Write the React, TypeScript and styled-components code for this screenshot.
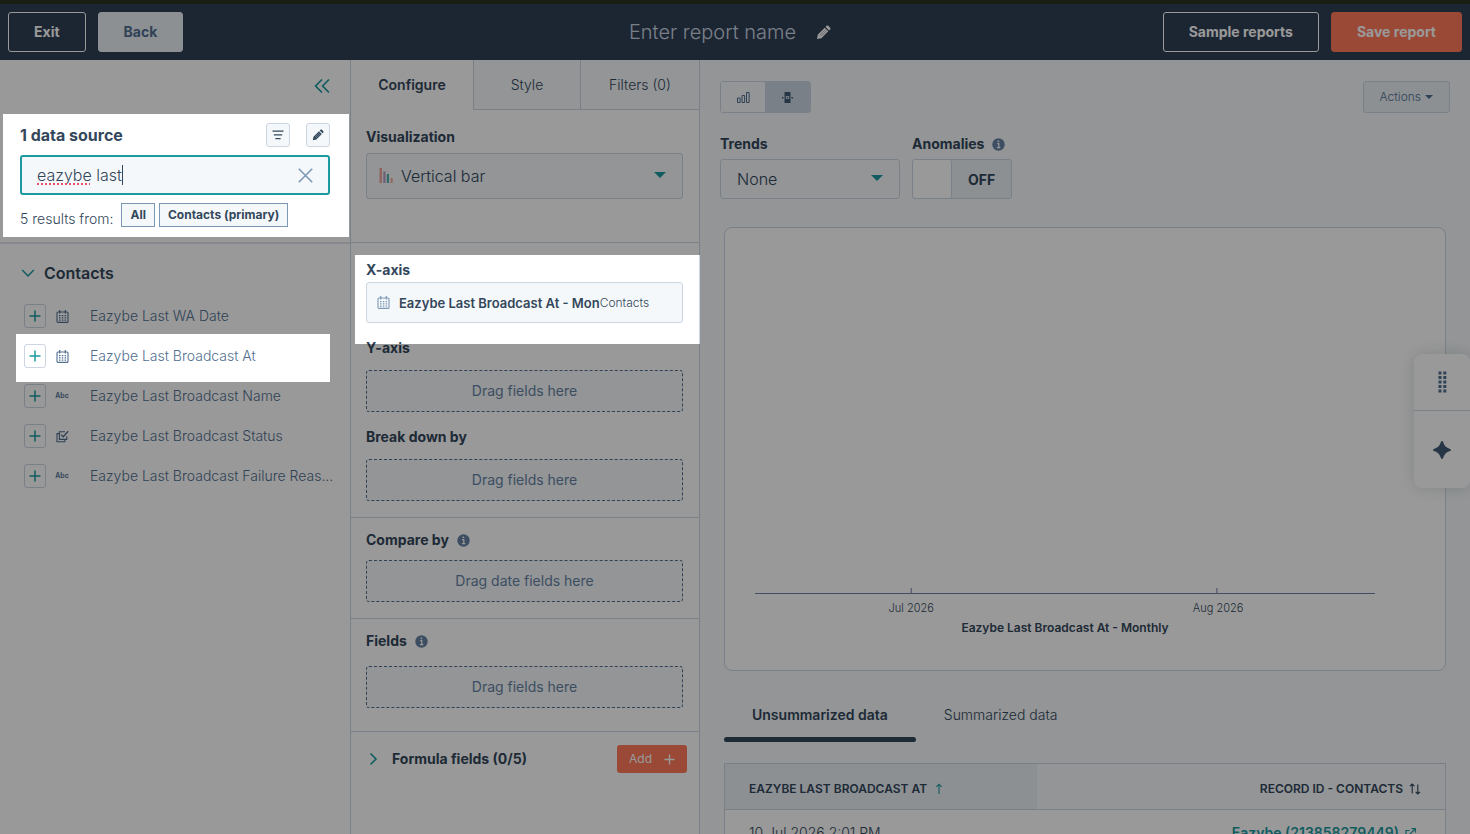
import React, { useState } from 'react';
import styled, { createGlobalStyle, css } from 'styled-components';

const c = {
  navy: '#33475b',
  slate: '#516f90',
  steel: '#6683a5',
  mist: '#7c98b6',
  header: '#303e54',
  teal: '#1d9aa0',
  orange: '#ff7a59',
  line: '#cbd6e2',
  fill: '#f5f8fa',
  shade: '#eaf0f6',
};

const GlobalStyle = createGlobalStyle`
  *, *::before, *::after { box-sizing: border-box; }
  body {
    margin: 0;
    overflow: hidden;
    background: #fff;
    color: ${c.navy};
    font-family: Inter, 'Open Sans', sans-serif;
    font-size: 14px;
    line-height: 20px;
  }
  button, input, select { font: inherit; color: inherit; margin: 0; }
  button { cursor: pointer; padding: 0; }
  h1, h2, h3, ul { margin: 0; padding: 0; font: inherit; }
  svg { display: block; flex: none; }
`;

const Shell = styled.div`
  display: flex;
  flex-direction: column;
  height: 100vh;
  overflow: hidden;
`;

/* ---------- header ---------- */

const Header = styled.header`
  display: grid;
  grid-template-columns: 1fr auto 1fr;
  align-items: center;
  flex: none;
  padding: 8px;
  border-top: 4px solid #2d3520;
  background: ${c.header};
`;

const HeaderGroup = styled.div<{ $end?: boolean }>`
  display: flex;
  gap: 12px;
  justify-content: ${(p) => (p.$end ? 'flex-end' : 'flex-start')};
`;

const HeaderButton = styled.button<{ $kind: 'outline' | 'muted' | 'primary' }>`
  height: 40px;
  padding: 0 25px;
  border: 1px solid #fff;
  border-radius: 3px;
  font-weight: 700;
  white-space: nowrap;
  background: transparent;
  color: #fff;
  ${(p) => p.$kind === 'muted' && css`background: ${c.shade}; border-color: ${c.shade}; color: ${c.slate};`}
  ${(p) => p.$kind === 'primary' && css`background: ${c.orange}; border-color: ${c.orange};`}
`;

const ReportName = styled.button`
  display: flex;
  align-items: center;
  gap: 20px;
  padding-right: 10px;
  border: 0;
  background: none;
  color: ${c.line};
  font-size: 20px;
  line-height: 24px;
  font-weight: 300;
  svg { color: #fff; }
`;

/* ---------- columns ---------- */

const Columns = styled.div`
  display: grid;
  grid-template-columns: 351px 349px minmax(0, 1fr);
  flex: 1;
  min-height: 0;
`;

const Sources = styled.aside`
  border-right: 1px solid ${c.line};
  overflow: hidden;
`;

const CollapseRow = styled.div`
  display: flex;
  align-items: center;
  justify-content: flex-end;
  height: 52px;
  padding-right: 20px;
`;

const BareButton = styled.button`
  display: flex;
  align-items: center;
  justify-content: center;
  border: 0;
  background: none;
  color: ${c.teal};
`;

const SourceTools = styled.div`
  display: flex;
  flex-direction: column;
  gap: 8px;
  padding: 11px 20px 15px;
  border-bottom: 2px solid #dfe3eb;
`;

const SourceHead = styled.div`
  display: flex;
  align-items: center;
  gap: 16px;
`;

const SourceTitle = styled.h2`
  flex: 1;
  font-size: 16px;
  font-weight: 700;
`;

const SmallButton = styled.button<{ $plus?: boolean }>`
  display: flex;
  align-items: center;
  justify-content: center;
  flex: none;
  width: ${(p) => (p.$plus ? 22 : 24)}px;
  height: 24px;
  border: 1px solid ${c.line};
  border-radius: 3px;
  background: ${(p) => (p.$plus ? '#fff' : c.fill)};
  color: ${(p) => (p.$plus ? c.teal : c.navy)};
`;

const SearchBox = styled.div`
  position: relative;
  display: flex;
  align-items: center;
  height: 40px;
  padding: 0 15px;
  border: 2px solid ${c.teal};
  border-radius: 3px;
  background: ${c.fill};
`;

const SearchInput = styled.input`
  flex: 1;
  min-width: 0;
  padding: 0;
  border: 0;
  outline: 0;
  background: none;
  font-size: 16px;
  font-weight: 300;
`;

const Misspelling = styled.svg`
  position: absolute;
  left: 15px;
  bottom: 8px;
`;

const Caret = styled.span`
  position: absolute;
  left: 100px;
  top: 8px;
  width: 1px;
  height: 20px;
  background: ${c.navy};
`;

const ResultRow = styled.div`
  display: flex;
  align-items: center;
  gap: 4px;
`;

const ResultCount = styled.span`
  padding: 7px 4px 0 0;
  font-weight: 300;
  line-height: 17px;
`;

const Chip = styled.button`
  height: 24px;
  padding: 0 8px;
  border: 1px solid ${c.mist};
  background: ${c.fill};
  font-size: 12px;
  font-weight: 700;
`;

const GroupHead = styled.button`
  display: flex;
  align-items: center;
  gap: 8px;
  padding: 18px 20px 12px;
  border: 0;
  background: none;
  color: ${c.navy};
  font-size: 16px;
  line-height: 22px;
  font-weight: 600;
  svg { color: ${c.teal}; }
`;

const PropertyList = styled.ul`
  list-style: none;
`;

const PropertyRow = styled.li`
  display: flex;
  align-items: center;
  height: 40px;
  padding: 0 14px 0 24px;
  color: ${c.slate};
`;

const TypeIcon = styled.span`
  display: flex;
  justify-content: center;
  flex: none;
  width: 32px;
  margin-right: 12px;
  font-size: 7px;
  font-weight: 600;
  line-height: 20px;
`;

const PropertyName = styled.span`
  overflow: hidden;
  text-overflow: ellipsis;
  white-space: nowrap;
  font-weight: 300;
`;

/* ---------- configuration ---------- */

const Config = styled.section`
  border-right: 1px solid ${c.line};
  overflow: hidden;
`;

const ConfigTabs = styled.div`
  display: grid;
  grid-template-columns: 122px 107px 1fr;
  height: 50px;
`;

const ConfigTab = styled.button<{ $active?: boolean }>`
  border: 0 solid ${c.line};
  border-width: ${(p) => (p.$active ? '0' : '0 0 1px 1px')};
  background: ${(p) => (p.$active ? '#fff' : c.fill)};
  font-weight: ${(p) => (p.$active ? 600 : 300)};
`;

const Section = styled.div<{ $top: number; $bottom: number }>`
  display: flex;
  flex-direction: column;
  gap: 15px;
  padding: ${(p) => p.$top}px 16px ${(p) => p.$bottom}px 15px;
  border-bottom: 1px solid ${c.line};
`;

const Field = styled.div<{ $gap: number }>`
  display: flex;
  flex-direction: column;
  gap: ${(p) => p.$gap}px;
`;

const FieldRow = styled.div`
  display: grid;
  grid-template-columns: 180px 100px;
  gap: 12px;
  padding-top: 21px;
`;

const Label = styled.label`
  display: flex;
  align-items: center;
  gap: 8px;
  font-weight: 700;
`;

const SelectWrap = styled.div<{ $height: number }>`
  position: relative;
  height: ${(p) => p.$height}px;
`;

const Select = styled.select<{ $indent: number }>`
  appearance: none;
  width: 100%;
  height: 100%;
  padding: 0 32px 0 ${(p) => p.$indent}px;
  border: 1px solid ${c.line};
  border-radius: 3px;
  background: ${c.fill};
  font-size: 16px;
  font-weight: 300;
`;

const SelectArrow = styled.span`
  position: absolute;
  right: 17px;
  top: 50%;
  margin-top: -4px;
  border: 6px solid transparent;
  border-top-color: ${c.teal};
  border-bottom: 0;
  pointer-events: none;
`;

const SelectIcon = styled.span`
  position: absolute;
  left: 13px;
  top: 15px;
  pointer-events: none;
`;

const Picked = styled.button`
  display: flex;
  align-items: center;
  height: 41px;
  padding: 0 10px;
  border: 1px solid ${c.line};
  border-radius: 3px;
  background: ${c.fill};
  font-size: 13px;
  white-space: nowrap;
  overflow: hidden;
  svg { margin-right: 9px; color: ${c.mist}; }
`;

const PickedName = styled.span`
  font-weight: 600;
`;

const PickedSource = styled.span`
  font-size: 12px;
  font-weight: 300;
`;

const DropZone = styled.div`
  display: flex;
  align-items: center;
  justify-content: center;
  height: 42px;
  border: 1px dashed ${c.slate};
  border-radius: 3px;
  background: ${c.fill};
  color: ${c.steel};
`;

const Formula = styled.div`
  display: flex;
  align-items: center;
  justify-content: space-between;
  padding: 13px 12px 13px 15px;
`;

const FormulaTitle = styled(BareButton)`
  gap: 12px;
  font-weight: 700;
  span { color: ${c.navy}; }
`;

const AddButton = styled.button`
  display: flex;
  align-items: center;
  gap: 12px;
  height: 28px;
  padding: 0 12px;
  border: 0;
  border-radius: 3px;
  background: ${c.orange};
  color: #fff;
  font-size: 12px;
  font-weight: 400;
`;

/* ---------- preview ---------- */

const Preview = styled.main`
  padding: 21px 20px 0;
  background: ${c.fill};
  overflow: hidden;
`;

const Toolbar = styled.div`
  display: flex;
  justify-content: space-between;
`;

const Segments = styled.div`
  display: flex;
  height: 32px;
  border: 1px solid ${c.line};
  border-radius: 3px;
`;

const Segment = styled.button<{ $active?: boolean }>`
  display: flex;
  align-items: center;
  justify-content: center;
  width: ${(p) => (p.$active ? 45 : 44)}px;
  border: 0;
  background: ${(p) => (p.$active ? c.line : c.fill)};
  color: ${c.slate};
`;

const ActionsButton = styled.button`
  display: flex;
  align-items: center;
  gap: 4px;
  height: 32px;
  padding: 0 16px;
  border: 1px solid ${c.line};
  border-radius: 3px;
  background: ${c.shade};
  color: ${c.slate};
  font-size: 12px;
  font-weight: 300;
  &::after {
    content: '';
    border: 4px solid transparent;
    border-top-color: ${c.slate};
    border-bottom: 0;
  }
`;

const Toggle = styled.label`
  position: relative;
  display: flex;
  align-items: stretch;
  height: 40px;
  border: 1px solid ${c.line};
  border-radius: 3px;
  background: ${c.shade};
  font-weight: 700;
  cursor: pointer;
  &::before {
    content: '';
    width: 39px;
    border-right: 1px solid ${c.line};
    border-radius: 3px;
    background: #fff;
  }
  span { margin: auto; padding-top: 2px; }
  input { position: absolute; inset: 0; opacity: 0; }
`;

const ChartCard = styled.figure`
  margin: 28px 4px 0;
  padding: 351px 70px 33px 30px;
  border: 1px solid ${c.line};
  border-radius: 8px;
  background: #fff;
`;

const ChartAxis = styled.svg`
  width: 100%;
  height: 58px;
  overflow: visible;
  line { stroke: #6f7fa5; }
  text { fill: ${c.navy}; text-anchor: middle; font-size: 11px; font-weight: 300; }
  text.title { font-size: 12px; font-weight: 600; }
`;

const DataTabs = styled.div`
  display: flex;
  padding: 17px 4px 0;
`;

const DataTab = styled.button<{ $active?: boolean }>`
  height: 54px;
  padding: 0 28px;
  border: 0;
  background: none;
  font-weight: ${(p) => (p.$active ? 600 : 300)};
  position: relative;
  &::after {
    content: '';
    display: ${(p) => (p.$active ? 'block' : 'none')};
    position: absolute;
    inset: auto 0 0;
    height: 5px;
    border-radius: 3px;
    background: ${c.navy};
  }
`;

const DataTableWrap = styled.div`
  padding: 21px 4px 0;
`;

const DataTable = styled.table`
  width: 100%;
  border: 1px solid ${c.line};
  border-collapse: separate;
  border-spacing: 0;
  background: #fff;
`;

const HeadCell = styled.th<{ $sorted?: boolean }>`
  width: ${(p) => (p.$sorted ? '312px' : 'auto')};
  height: 46px;
  padding: 4px 24px 0;
  border-right: ${(p) => (p.$sorted ? 1 : 0)}px solid ${c.shade};
  border-bottom: 1px solid ${c.line};
  background: ${(p) => (p.$sorted ? c.shade : c.fill)};
  text-align: left;
  font-size: 12px;
  font-weight: 600;
  white-space: nowrap;
`;

const HeadContent = styled.span<{ $end?: boolean }>`
  display: flex;
  align-items: center;
  justify-content: ${(p) => (p.$end ? 'flex-end' : 'flex-start')};
  gap: 6px;
`;

const Cell = styled.td`
  padding: 13px 24px;
  font-weight: 300;
`;

const RecordLink = styled.a`
  display: flex;
  align-items: center;
  justify-content: flex-end;
  gap: 6px;
  padding-right: 5px;
  color: ${c.teal};
  font-weight: 600;
  text-decoration: none;
`;

/* ---------- layers over the page ---------- */

const Dock = styled.div`
  position: fixed;
  right: 0;
  top: 354px;
  width: 56px;
  border-radius: 8px;
  background: #fff;
  box-shadow: 0 0 16px rgba(51, 71, 91, 0.18);
`;

const DockButton = styled(BareButton)<{ $height: number }>`
  width: 100%;
  height: ${(p) => p.$height}px;
  color: #425b76;
  & + & { border-top: 1px solid ${c.line}; }
`;

type Hole = [number, number, number, number];

const holes: Hole[] = [
  [3, 114, 349, 237],
  [16, 334, 330, 382],
  [355, 255, 700, 344],
];

const holePath = holes
  .map(([l, t, r, b]) => `${l}px ${t}px, ${r}px ${t}px, ${r}px ${b}px, ${l}px ${b}px, ${l}px ${t}px, 0 0`)
  .join(', ');

const Dim = styled.div`
  position: fixed;
  inset: 0;
  z-index: 10;
  background: rgba(0, 0, 0, 0.4);
  pointer-events: none;
  clip-path: polygon(evenodd, 0 0, 100% 0, 100% 100%, 0 100%, 0 0, ${holePath});
`;

/* ---------- icons ---------- */

const Pencil = ({ size }: { size: number }) => (
  <svg width={size} height={size} viewBox="0 0 16 16" aria-hidden="true">
    <path
      fill="currentColor"
      d="M1 15l1-4.8L9.3 2.900l3.8 3.800L5.800 14zM10.200 2l1.100-1.100c.5-.5 1.300-.5 1.800 0l2 2c.5.5.5 1.300 0 1.800L14 5.800z"
    />
    <path stroke="#8a97a8" strokeWidth="0.8" fill="none" d="M4 10.800l6-6M5.300 12.100l6-6" />
  </svg>
);

const Calendar = () => (
  <svg width="13" height="13" viewBox="0 0 13 13" fill="none" stroke="currentColor" aria-hidden="true">
    <rect x="1" y="2" width="11" height="10.4" rx="1" strokeWidth="1.1" />
    <path d="M3.7 0v3.4M9.3 0v3.4" strokeWidth="1.2" />
    <path d="M3 5.7h7.2M3 7.9h7.2M3 10.1h7.2" strokeWidth="1.2" strokeDasharray="1.5 1.3" />
  </svg>
);

const CheckStack = () => (
  <svg width="13" height="13" viewBox="0 0 13 13" fill="none" stroke="currentColor" strokeWidth="1.1" aria-hidden="true">
    <path d="M9 1.8H3.4v7.6h7.4V6.2" />
    <path d="M3 3.6H1v8.2h7.8V9.8" />
    <path d="M5 4.6l2.2 2.2 5-5.6" strokeWidth="1.3" />
  </svg>
);

const Plus = ({ size = 12 }: { size?: number }) => (
  <svg width={size} height={size} viewBox="0 0 12 12" stroke="currentColor" strokeWidth="1.5" aria-hidden="true">
    <path d="M6 0.5v11M0.5 6h11" />
  </svg>
);

const Info = () => (
  <svg width="13" height="13" viewBox="0 0 13 13" aria-hidden="true">
    <circle cx="6.5" cy="6.5" r="6.2" fill={c.steel} />
    <path d="M5.2 5.6h1.6v4M4.9 9.7h3.4" stroke="#fff" strokeWidth="1.2" fill="none" />
    <circle cx="6.4" cy="3.3" r="0.9" fill="#fff" />
  </svg>
);

const Bars = () => (
  <svg width="14" height="15" viewBox="0 0 14 15" aria-hidden="true">
    <path fill="#f2a6a0" d="M0.5 0h2.5v15H0.5z" />
    <path fill="#b99cc4" d="M4.3 3.5h2.2v11.5H4.3z" />
    <path fill="#4fb0b0" d="M7.8 6h2.2v9H7.8z" />
    <path fill="#f0b0a0" d="M11.5 10h2.2v5h-2.2z" />
  </svg>
);

/* ---------- content ---------- */

const properties = [
  { name: 'Eazybe Last WA Date', icon: <Calendar /> },
  { name: 'Eazybe Last Broadcast At', icon: <Calendar /> },
  { name: 'Eazybe Last Broadcast Name', icon: 'Abc' },
  { name: 'Eazybe Last Broadcast Status', icon: <CheckStack /> },
  { name: 'Eazybe Last Broadcast Failure Reas...', icon: 'Abc' },
];

function SourcePanel() {
  const [query, setQuery] = useState('eazybe last');
  return (
    <Sources>
      <CollapseRow>
        <BareButton aria-label="Collapse panel">
          <svg width="16" height="16" viewBox="0 0 16 16" fill="none" stroke="currentColor" strokeWidth="1.7">
            <path d="M8 1.5L1.6 8 8 14.5M15 1.5L8.6 8l6.4 6.5" />
          </svg>
        </BareButton>
      </CollapseRow>
      <SourceTools>
        <SourceHead>
          <SourceTitle>1 data source</SourceTitle>
          <SmallButton aria-label="Filter">
            <svg width="12" height="10" viewBox="0 0 12 10" stroke="currentColor" strokeWidth="1.2">
              <path d="M0.5 1.1h11M1.8 4.9h8.4M3.4 8.7h5.2" />
            </svg>
          </SmallButton>
          <SmallButton aria-label="Edit sources">
            <Pencil size={12} />
          </SmallButton>
        </SourceHead>
        <SearchBox>
          <SearchInput aria-label="Search properties" spellCheck={false} value={query} onChange={(e) => setQuery(e.target.value)} />
          <Misspelling width="53" height="2" aria-hidden="true">
            <path d="M0 1h53" stroke="#e8506a" strokeWidth="2" strokeDasharray="2 2" />
          </Misspelling>
          <Caret />
          <BareButton aria-label="Clear search" onClick={() => setQuery('')}>
            <svg width="15" height="15" viewBox="0 0 15 15" stroke={c.mist} strokeWidth="1.6">
              <path d="M0.8 0.8l13.4 13.4M14.2 0.8L0.8 14.2" />
            </svg>
          </BareButton>
        </SearchBox>
        <ResultRow>
          <ResultCount>5 results from:</ResultCount>
          <Chip>All</Chip>
          <Chip>Contacts (primary)</Chip>
        </ResultRow>
      </SourceTools>
      <GroupHead>
        <svg width="16" height="16" viewBox="0 0 16 16" fill="none" stroke="currentColor" strokeWidth="1.5">
          <path d="M2.2 5L8 11l5.8-6" />
        </svg>
        Contacts
      </GroupHead>
      <PropertyList>
        {properties.map((p) => (
          <PropertyRow key={p.name}>
            <SmallButton $plus aria-label={`Add ${p.name}`}>
              <Plus />
            </SmallButton>
            <TypeIcon>{p.icon}</TypeIcon>
            <PropertyName>{p.name}</PropertyName>
          </PropertyRow>
        ))}
      </PropertyList>
    </Sources>
  );
}

function ConfigPanel() {
  return (
    <Config>
      <ConfigTabs role="tablist">
        <ConfigTab role="tab" aria-selected $active>Configure</ConfigTab>
        <ConfigTab role="tab">Style</ConfigTab>
        <ConfigTab role="tab">Filters (0)</ConfigTab>
      </ConfigTabs>
      <Section $top={17} $bottom={43}>
        <Field $gap={6}>
          <Label htmlFor="visualization">Visualization</Label>
          <SelectWrap $height={46}>
            <Select id="visualization" $indent={34}>
              <option>Vertical bar</option>
            </Select>
            <SelectIcon><Bars /></SelectIcon>
            <SelectArrow />
          </SelectWrap>
        </Field>
      </Section>
      <Section $top={17} $bottom={16}>
        <Field $gap={2}>
          <Label htmlFor="x-axis">X-axis</Label>
          <Picked id="x-axis">
            <Calendar />
            <PickedName>Eazybe Last Broadcast At - Mon</PickedName>
            <PickedSource>Contacts</PickedSource>
          </Picked>
        </Field>
        <Field $gap={12}>
          <Label as="h3">Y-axis</Label>
          <DropZone>Drag fields here</DropZone>
        </Field>
        <Field $gap={12}>
          <Label as="h3">Break down by</Label>
          <DropZone>Drag fields here</DropZone>
        </Field>
      </Section>
      <Section $top={12} $bottom={16}>
        <Field $gap={10}>
          <Label as="h3">Compare by <Info /></Label>
          <DropZone>Drag date fields here</DropZone>
        </Field>
      </Section>
      <Section $top={12} $bottom={23}>
        <Field $gap={15}>
          <Label as="h3">Fields <Info /></Label>
          <DropZone>Drag fields here</DropZone>
        </Field>
      </Section>
      <Formula>
        <FormulaTitle>
          <svg width="14" height="14" viewBox="0 0 14 14" fill="none" stroke="currentColor" strokeWidth="1.6">
            <path d="M4.5 1.5L10 7l-5.5 5.5" />
          </svg>
          <span>Formula fields (0/5)</span>
        </FormulaTitle>
        <AddButton>Add <Plus size={11} /></AddButton>
      </Formula>
    </Config>
  );
}

function PreviewPanel() {
  const [on, setOn] = useState(false);
  return (
    <Preview>
      <Toolbar>
        <Segments>
          <Segment aria-label="Chart only">
            <svg width="13" height="11" viewBox="0 0 13 11" fill="none" stroke="currentColor">
              <path d="M0.5 6h2.6v4.5H0.5zM5 3.5h2.6v7H5zM9.5 0.5h2.6v10H9.5z" />
            </svg>
          </Segment>
          <Segment aria-label="Chart and table" $active>
            <svg width="11" height="11" viewBox="0 0 11 11" fill="#425b76">
              <path d="M2.5 0h6v4h-6zM2.5 7h6v4h-6zM0 5h1.5v1.4H0zM2.5 4h1.3v3H2.5zM7.2 4h1.3v3H7.2zM4.8 5h1.4v1.2H4.8zM9.5 5H11v1.4H9.5z" />
            </svg>
          </Segment>
        </Segments>
        <ActionsButton>Actions</ActionsButton>
      </Toolbar>
      <FieldRow>
        <Field $gap={5}>
          <Label htmlFor="trends">Trends</Label>
          <SelectWrap $height={40}>
            <Select id="trends" $indent={16}>
              <option>None</option>
            </Select>
            <SelectArrow />
          </SelectWrap>
        </Field>
        <Field $gap={5}>
          <Label htmlFor="anomalies">Anomalies <Info /></Label>
          <Toggle>
            <input id="anomalies" type="checkbox" role="switch" checked={on} onChange={(e) => setOn(e.target.checked)} />
            <span>{on ? 'ON' : 'OFF'}</span>
          </Toggle>
        </Field>
      </FieldRow>
      <ChartCard>
        <ChartAxis role="img" aria-label="Eazybe Last Broadcast At - Monthly">
          <line x1="0" x2="100%" y1="14.5" y2="14.5" />
          <line x1="25.2%" x2="25.2%" y1="9" y2="14" />
          <line x1="74.5%" x2="74.5%" y1="9" y2="14" />
          <text x="25.2%" y="33">Jul 2026</text>
          <text x="74.7%" y="33">Aug 2026</text>
          <text x="50%" y="53" className="title">Eazybe Last Broadcast At - Monthly</text>
        </ChartAxis>
      </ChartCard>
      <DataTabs role="tablist">
        <DataTab role="tab" aria-selected $active>Unsummarized data</DataTab>
        <DataTab role="tab">Summarized data</DataTab>
      </DataTabs>
      <DataTableWrap>
        <DataTable>
          <thead>
            <tr>
              <HeadCell $sorted>
                <HeadContent>
                  EAZYBE LAST BROADCAST AT
                  <svg width="12" height="12" viewBox="0 0 12 12" fill="none" stroke={c.teal} strokeWidth="1.1">
                    <path d="M6 11V1.2M3.4 3.8L6 1.2l2.6 2.6" />
                  </svg>
                </HeadContent>
              </HeadCell>
              <HeadCell>
                <HeadContent $end>
                  RECORD ID - CONTACTS
                  <svg width="12" height="12" viewBox="0 0 12 12" fill="none" stroke="currentColor" strokeWidth="1.1">
                    <path d="M3.2 10.5V1M1 3.2L3.2 1l2.2 2.2M8.8 1.5V11M6.6 8.8L8.8 11 11 8.8" />
                  </svg>
                </HeadContent>
              </HeadCell>
            </tr>
          </thead>
          <tbody>
            <tr>
              <Cell>10 Jul 2026 2:01 PM</Cell>
              <Cell>
                <RecordLink href="#record">
                  Eazybe (213858279449)
                  <svg width="11" height="11" viewBox="0 0 11 11" fill="none" stroke="currentColor" strokeWidth="1.2">
                    <path d="M4.5 2.5H1v8h7.5V7M6.5 0.7h3.8v3.8M10.3 0.7L4.8 6.2" />
                  </svg>
                </RecordLink>
              </Cell>
            </tr>
          </tbody>
        </DataTable>
      </DataTableWrap>
    </Preview>
  );
}

const dots = [0, 4.5, 9, 13.5, 18];

export default function App() {
  return (
    <Shell>
      <GlobalStyle />
      <Header>
        <HeaderGroup>
          <HeaderButton $kind="outline">Exit</HeaderButton>
          <HeaderButton $kind="muted">Back</HeaderButton>
        </HeaderGroup>
        <ReportName>
          Enter report name
          <Pencil size={15} />
        </ReportName>
        <HeaderGroup $end>
          <HeaderButton $kind="outline">Sample reports</HeaderButton>
          <HeaderButton $kind="primary">Save report</HeaderButton>
        </HeaderGroup>
      </Header>
      <Columns>
        <SourcePanel />
        <ConfigPanel />
        <PreviewPanel />
      </Columns>
      <Dock>
        <DockButton $height={56} aria-label="Move dock">
          <svg width="9" height="22" viewBox="0 0 9 22" fill={c.slate}>
            {dots.map((y) => (
              <path key={y} d={`M0.5 ${y + 0.5}h3v3h-3zM5.3 ${y + 0.5}h3v3h-3z`} />
            ))}
          </svg>
        </DockButton>
        <DockButton $height={78} aria-label="Assistant">
          <svg width="18" height="18" viewBox="0 0 18 18" fill="currentColor">
            <path d="M9 0c.6 0 .9.4 1.1 1 1.2 3.8 3.1 5.7 6.9 6.9.6.2 1 .5 1 1.1s-.4.9-1 1.1c-3.8 1.2-5.7 3.1-6.9 6.9-.2.6-.5 1-1.1 1s-.9-.4-1.1-1C6.7 13.2 4.8 11.3 1 10.1.4 9.9 0 9.6 0 9s.4-.9 1-1.1C4.8 6.7 6.7 4.8 7.9 1 8.1.4 8.4 0 9 0z" />
          </svg>
        </DockButton>
      </Dock>
      <Dim />
    </Shell>
  );
}
